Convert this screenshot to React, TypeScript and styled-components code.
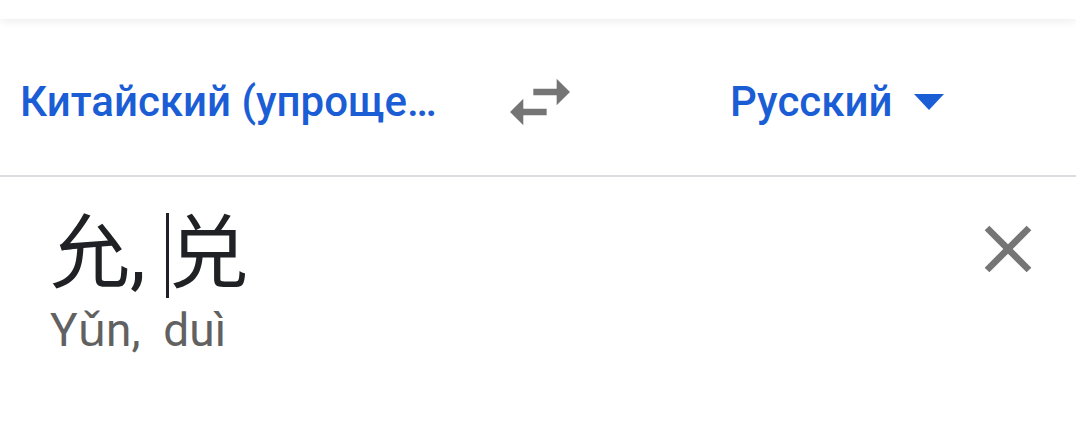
import styled, { createGlobalStyle } from 'styled-components'

const GlobalStyle = createGlobalStyle`
    html, body {
        margin: 0;
        padding: 0;
        background: #fff;
    }
    body {
        font-family: Roboto, "Noto Sans", Arial, sans-serif;
    }
`

const Page = styled.div`
    width: 1076px;
    height: 448px;
    overflow: hidden;
    background: #fff;
`

const Header = styled.div`
    height: 19px;
    background: #fff;
    box-shadow: 0 2px 10px rgba(0, 0, 0, 0.08);
    position: relative;
    z-index: 1;
`

const LangBar = styled.div`
    display: flex;
    align-items: center;
    height: 147px;
    padding-top: 9px;
    border-bottom: 2px solid #dadce0;
`

const LangSide = styled.div`
    flex: 0 0 ${({ $w }) => $w}px;
    display: flex;
    align-items: center;
    padding-left: ${({ $pad }) => $pad || 0}px;
    box-sizing: border-box;
    min-width: 0;
`

const LangName = styled.div`
    color: #1a5dd5;
    font-size: 42px;
    font-weight: 500;
    white-space: nowrap;
    overflow: hidden;
    text-overflow: ellipsis;
    max-width: ${({ $max }) => $max || 1000}px;
`

const IconBox = styled.div`
    width: 80px;
    height: 80px;
    flex: 0 0 80px;
    display: flex;
    align-items: center;
    justify-content: center;
`

const Drop = styled.div`
    margin-left: 22px;
    display: flex;
`

const Input = styled.div`
    display: flex;
    justify-content: space-between;
    align-items: flex-start;
    padding: 24px 0 0 50px;
`

const Source = styled.div`
    font-family: Roboto, "Noto Sans CJK SC", sans-serif;
    font-size: 80px;
    line-height: 107px;
    height: 90px;
    color: #202124;
    display: flex;
    align-items: flex-start;
    white-space: pre;
`

const Caret = styled.span`
    display: inline-block;
    width: 3px;
    height: 85px;
    margin-top: 12px;
    background: #202124;
`

const Pinyin = styled.div`
    font-size: 46px;
    color: #616161;
    margin-top: 6px;
    white-space: pre;
`

const Close = styled.div`
    width: 80px;
    height: 80px;
    margin: 8px 28px 0 0;
`

function SwapIcon() {
    return (
        <svg width="80" height="80" viewBox="0 0 24 24">
            <path fill="#757575" d="M6.99 11L3 15l3.99 4v-3H14v-2H6.99v-3zM21 9l-4-4v3H10v2h7v3l4-4z" />
        </svg>
    )
}

function DropIcon() {
    return (
        <svg width="30" height="16" viewBox="0 0 30 16">
            <path fill="#1a5dd5" d="M0 0h30L15 16z" />
        </svg>
    )
}

function CloseIcon() {
    return (
        <svg width="80" height="80" viewBox="0 0 24 24">
            <path fill="#757575" d="M19 6.41L17.59 5 12 10.59 6.41 5 5 6.41 10.59 12 5 17.59 6.41 19 12 13.41 17.59 19 19 17.59 13.41 12z" />
        </svg>
    )
}

export default function App() {
    return (
        <Page>
            <GlobalStyle />
            <Header />
            <LangBar>
                <LangSide $w={500} $pad={20}>
                    <LangName $max={435}>Китайский (упрощенный)</LangName>
                </LangSide>
                <IconBox>
                    <SwapIcon />
                </IconBox>
                <LangSide $w={496} $pad={150}>
                    <LangName>Русский</LangName>
                    <Drop>
                        <DropIcon />
                    </Drop>
                </LangSide>
            </LangBar>
            <Input>
                <div>
                    <Source>
                        {'允, '}<Caret />兑
                    </Source>
                    <Pinyin>Yǔn,  duì</Pinyin>
                </div>
                <Close>
                    <CloseIcon />
                </Close>
            </Input>
        </Page>
    )
}
